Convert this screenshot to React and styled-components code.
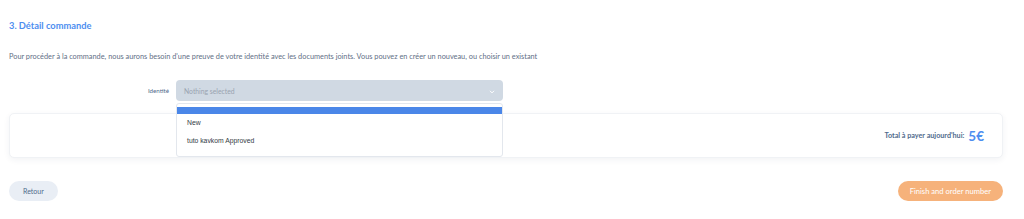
import React from 'react';
import styled, { createGlobalStyle } from 'styled-components';

const GlobalStyle = createGlobalStyle`
  body {
    margin: 0;
    background: #ffffff;
    font-family: Lato, "Noto Sans", sans-serif;
  }
`;

const Page = styled.div`
  width: 1024px;
  height: 219px;
  box-sizing: border-box;
  padding: 20px 21px 0 9px;
  overflow: hidden;
`;

const Title = styled.h2`
  margin: 0;
  font-size: 9.3px;
  line-height: 11px;
  font-weight: 700;
  color: #4d8ef0;
`;

const Intro = styled.p`
  margin: 21px 0 0;
  font-size: 7.35px;
  line-height: 9px;
  color: #5f6f86;
`;

const FieldRow = styled.div`
  display: flex;
  align-items: center;
  margin-top: 19px;
  position: relative;
  z-index: 2;
`;

const Label = styled.label`
  width: 160px;
  text-align: right;
  padding-right: 7px;
  font-size: 6.2px;
  color: #4f6a8c;
`;

const SelectWrap = styled.div`
  position: relative;
  width: 327px;
`;

const SelectBox = styled.div`
  height: 21px;
  display: flex;
  align-items: center;
  justify-content: space-between;
  padding: 0 8px;
  background: #d0d9e3;
  border-radius: 4px;
  font-size: 6.8px;
  color: #99a3b0;
  box-sizing: border-box;
`;

const Chevron = styled.svg`
  width: 6px;
  height: 6px;
  margin-top: 2px;
`;

const Menu = styled.ul`
  position: absolute;
  top: 23px;
  left: 0;
  width: 327px;
  margin: 0;
  padding: 3px 0 6px;
  list-style: none;
  background: #ffffff;
  border: 1px solid #e3e7ed;
  border-radius: 3px;
  box-sizing: border-box;
  font-family: "Liberation Sans", Arial, sans-serif;
`;

const MenuItem = styled.li`
  height: ${p => (p.$active ? '7px' : '18px')};
  line-height: 18px;
  padding-left: 10px;
  font-size: 6.8px;
  color: #333a44;
  background: ${p => (p.$active ? '#4a86e8' : 'transparent')};
`;

const Card = styled.div`
  margin-top: 12px;
  height: 45px;
  display: flex;
  align-items: center;
  justify-content: flex-end;
  padding-right: 18px;
  background: #ffffff;
  border: 1px solid #f0f2f5;
  border-radius: 5px;
  box-shadow: 0 2px 6px rgba(30, 50, 90, 0.06);
  box-sizing: border-box;
`;

const TotalLabel = styled.span`
  font-size: 7.2px;
  font-weight: 700;
  color: #4f6a8c;
`;

const TotalValue = styled.span`
  margin-left: 4px;
  font-size: 13.5px;
  font-weight: 700;
  color: #4d8ef0;
`;

const Actions = styled.div`
  display: flex;
  justify-content: space-between;
  margin-top: 23px;
`;

const Button = styled.button`
  height: 20px;
  padding: 0 ${p => (p.$primary ? '12px' : '14px')};
  border: none;
  border-radius: 10px;
  font-family: Lato, "Noto Sans", sans-serif;
  font-size: ${p => (p.$primary ? '7.6px' : '7px')};
  background: ${p => (p.$primary ? '#f6b27b' : '#e9eef5')};
  color: ${p => (p.$primary ? '#ffffff' : '#4f6a8c')};
  cursor: pointer;
`;

export default function App() {
  return (
    <>
      <GlobalStyle />
      <Page>
        <Title>3. Détail commande</Title>
        <Intro>
          Pour procéder à la commande, nous aurons besoin d'une preuve de votre identité avec les documents joints. Vous pouvez en créer un nouveau, ou choisir un existant
        </Intro>
        <FieldRow>
          <Label>Identité</Label>
          <SelectWrap>
            <SelectBox>
              <span>Nothing selected</span>
              <Chevron viewBox="0 0 10 10">
                <path d="M2 3.5 L5 6.5 L8 3.5" fill="none" stroke="#ffffff" strokeWidth="1.6" strokeLinecap="round" strokeLinejoin="round" />
              </Chevron>
            </SelectBox>
            <Menu>
              <MenuItem $active />
              <MenuItem>New</MenuItem>
              <MenuItem>tuto kavkom Approved</MenuItem>
            </Menu>
          </SelectWrap>
        </FieldRow>
        <Card>
          <TotalLabel>Total à payer aujourd'hui:</TotalLabel>
          <TotalValue>5€</TotalValue>
        </Card>
        <Actions>
          <Button>Retour</Button>
          <Button $primary>Finish and order number</Button>
        </Actions>
      </Page>
    </>
  );
}
